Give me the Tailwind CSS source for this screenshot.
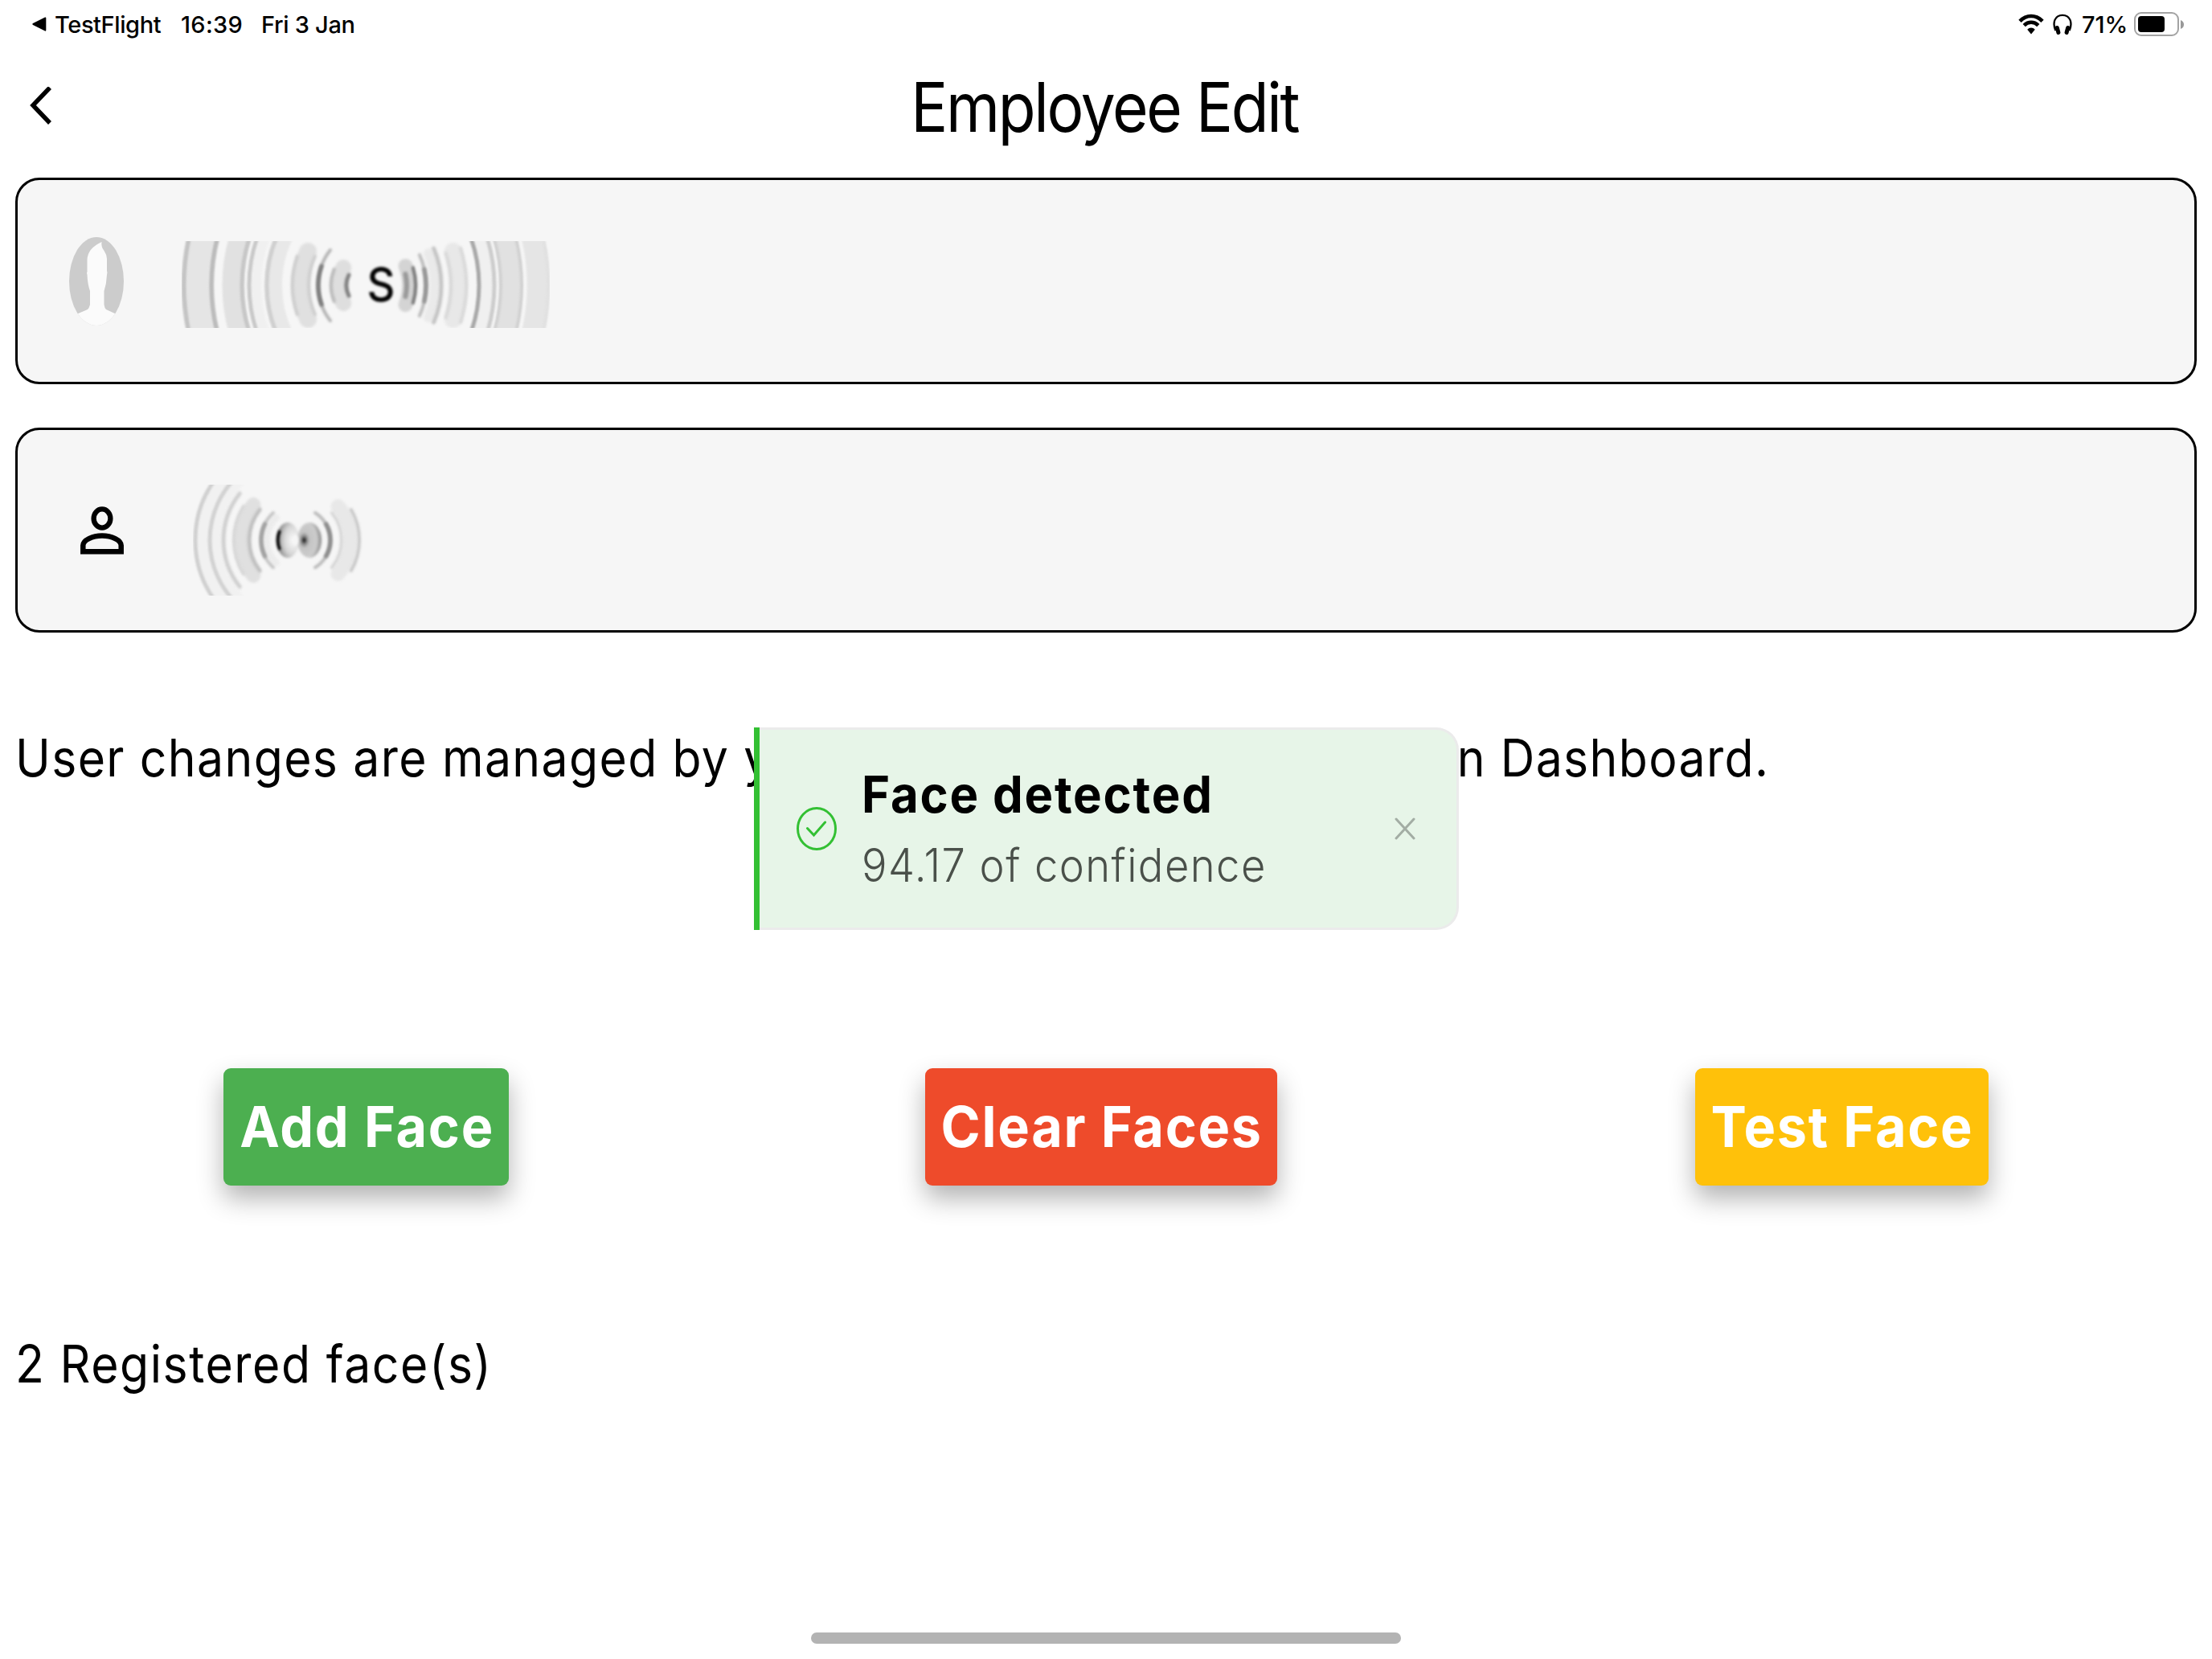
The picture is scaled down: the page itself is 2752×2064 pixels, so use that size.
<!DOCTYPE html>
<html lang="en">
<head>
  <meta charset="utf-8">
  <meta name="viewport" content="width=device-width, initial-scale=1">
  <title>Employee Edit</title>
  <script src="https://cdn.jsdelivr.net/npm/@tailwindcss/browser@4"></script>
</head>
<body class="relative h-[2064px] w-[2752px] overflow-hidden bg-white font-['Inter',sans-serif] text-black">
  <!-- status bar -->
  <div class="flex h-[60px] items-center justify-between pl-[39px] pr-[35px] text-[29px] leading-none font-medium whitespace-nowrap">
    <div class="flex items-center">
      <svg class="h-[20px] w-[19px]" viewBox="0 0 19 20"><path d="M17 1.5 2 9q-1.8 1 0 2l15 7.500q1.300.5 1.300-1V2.500q0-1.500-1.300-1z" /></svg>
      <span class="ml-[10px] w-[133px] tracking-[-0.4px]">TestFlight</span>
      <span class="ml-[24px] w-[76px] tracking-[0.3px]">16:39</span>
      <span class="ml-[24px] tracking-[-0.3px]">Fri 3 Jan</span>
    </div>
    <div class="flex items-center">
      <svg class="h-[26px] w-[32px]" viewBox="0 0 32 26" fill="none" stroke="#000">
        <path d="M2 9.300Q8 3 16 3t14 6.300" stroke-width="4.600" />
        <path d="M7.200 14.600q3.800-3.800 8.800-3.800t8.800 3.800" stroke-width="4.600" />
        <path d="M16 17.500q2.800 0 4.800 2.300L16 25.500l-4.800-5.700q2-2.300 4.800-2.300z" fill="#000" stroke="none" />
      </svg>
      <svg class="ml-[11px] h-[26px] w-[24px]" viewBox="0 0 24 26" fill="none" stroke="#000">
        <path d="M3.300 21C-.8 11 2.500 1.800 12 1.800S24.800 11 20.700 21" stroke-width="2.300" />
        <path d="M5.300 17.500l1.600 6M18.700 17.500l-1.600 6" stroke-width="5" stroke-linecap="round" />
      </svg>
      <span class="ml-[12px] w-[55px]">71%</span>
      <div class="ml-[10px] flex h-[30px] w-[56px] items-center rounded-[9px] border-2 border-[#a3a3a3] pl-[3px]">
        <div class="h-[20px] w-[33px] rounded-[4px] bg-black"></div>
      </div>
      <svg class="ml-[2px] h-[11px] w-[4px]" viewBox="0 0 4 11"><path d="M0 0q4 1.500 4 5.500T0 11z" fill="#999" /></svg>
    </div>
  </div>

  <!-- header -->
  <header class="flex h-[146px] items-center px-[37px]">
    <svg class="h-[50px] w-[28px]" viewBox="0 0 28 50" fill="none" stroke="#000" stroke-width="5.500"><path d="M25 1 4 23l21 22" /></svg>
    <h1 class="grow pr-[35px] text-center text-[85px] leading-none tracking-[-2.500px] whitespace-nowrap scale-x-90">Employee Edit</h1>
  </header>

  <main class="px-[19px] pt-[15px]">
    <div class="flex h-[257px] items-center rounded-[30px] border-3 border-black bg-[#f6f6f6] pl-[64px]">
      <svg class="h-[110px] w-[68px]" viewBox="0 0 68 110">
        <clipPath id="avatar"><ellipse cx="34" cy="55" rx="34" ry="55" /></clipPath>
        <g clip-path="url(#avatar)">
          <path d="M0 0h68v110H0z" fill="#ccc" />
          <path d="M40.500 6Q23 14 22.500 28v15q-1 1.500 0 4 .5 12 3.500 20v17q-1 4-3 6L9 96v14h50V96L46 90q-2-2-2.500-6V67q3-9 3.500-20 1-3 0-5V27q-.5-6-3.500-10-4-5-3-11z" fill="#fbfbfb" />
        </g>
      </svg>
      <svg id="name" class="mt-[9px] ml-[72px] h-[108px] w-[458px]" viewBox="0 0 458 108">
        <text x="248" y="75" text-anchor="middle" class="blur-[1.500px] text-[59px] font-medium" textLength="35" lengthAdjust="spacingAndGlyphs">S</text>
      </svg>
    </div>

    <div class="mt-[54px] flex h-[255px] items-center rounded-[30px] border-3 border-black bg-[#f6f6f6] pl-[78px]">
      <svg class="h-[60px] w-[54px]" viewBox="0 0 54 60" fill="none" stroke="#000">
        <ellipse cx="27" cy="15" rx="10.400" ry="11.600" stroke-width="6.300" />
        <path d="M3.300 56.200V48.500C3.300 42 15 36.500 27 36.500S50.700 42 50.700 48.500v7.700z" stroke-width="6.500" />
      </svg>
      <svg id="code" class="mt-[25px] ml-[86px] h-[138px] w-[212px]" viewBox="0 0 212 138">
        <defs>
          <radialGradient id="core-left" cx=".75" cy=".5" r=".7"><stop offset=".1" stop-color="#f6f6f6" /><stop offset=".6" stop-color="#d4d4d4" /><stop offset=".85" stop-color="#aaa" /><stop offset="1" stop-color="#777" /></radialGradient>
          <radialGradient id="core-right" cx=".28" cy=".5" r=".75"><stop offset="0" stop-color="#000" /><stop offset=".15" stop-color="#888" /><stop offset=".3" stop-color="#c4c4c4" /><stop offset=".7" stop-color="#ccc" /><stop offset="1" stop-color="#777" /></radialGradient>
        </defs>
        <g class="blur-[1.500px]">
          <ellipse cx="118" cy="69" rx="14" ry="22" fill="url(#core-left)" />
          <ellipse cx="145" cy="69" rx="15" ry="22" fill="url(#core-right)" />
          <path d="M108 57q-5 12 0 24" fill="none" stroke="#000" stroke-width="4" />
          <ellipse cx="128" cy="69" rx="4" ry="7" fill="#f6f6f6" />
        </g>
      </svg>
    </div>

    <p class="mt-[124px] flex w-[2182px] justify-between text-[64px] leading-none tracking-[1.500px] whitespace-nowrap">
      <span class="origin-left scale-x-92">User changes are managed by your</span>
      <span class="origin-right scale-x-92">Admin Dashboard.</span>
    </p>

    <div class="mt-[354px] flex justify-around text-[70px] leading-none font-bold tracking-[1.800px] whitespace-nowrap text-white">
      <button class="flex h-[146px] w-[355px] items-center justify-center rounded-[9px] bg-[#4caf50] pl-[2px] shadow-[0_16px_32px_rgba(0,0,0,0.3)]"><span class="scale-x-95">Add Face</span></button>
      <button class="mr-[2px] flex h-[146px] w-[438px] items-center justify-center rounded-[9px] bg-[#ee4b2b] pl-[2px] shadow-[0_16px_32px_rgba(0,0,0,0.3)]"><span class="scale-x-95">Clear Faces</span></button>
      <button class="flex h-[146px] w-[365px] items-center justify-center rounded-[9px] bg-[#ffc10a] pl-[2px] shadow-[0_16px_32px_rgba(0,0,0,0.3)]"><span class="scale-x-95">Test Face</span></button>
    </div>

    <p class="mt-[190px] origin-left text-[64px] leading-none tracking-[1.700px] whitespace-nowrap scale-x-92">2 Registered face(s)</p>
  </main>

  <!-- toast -->
  <div class="absolute top-[905px] left-[938px] flex h-[252px] w-[877px]">
    <div class="w-[7px] bg-[#33c033]"></div>
    <div class="flex grow items-center rounded-r-[28px] border-y-3 border-r-3 border-[#ebebeb] bg-[#e7f5e8] pr-[51px] pl-[46px]">
      <svg class="h-[54px] w-[50px]" viewBox="0 0 50 54" fill="none" stroke="#33c033" stroke-width="3">
        <ellipse cx="25" cy="27" rx="23.500" ry="25.500" />
        <path d="M13.500 26.500 21.500 35 35.500 19" stroke-linecap="round" />
      </svg>
      <div class="ml-[31px] flex w-[640px] flex-col gap-[28px] leading-none whitespace-nowrap">
        <div class="origin-left text-[63px] font-bold tracking-[1.900px] scale-x-95">Face detected</div>
        <div class="origin-left text-[57px] font-light tracking-[1.600px] text-[#4a504a] scale-x-92">94.17 of confidence</div>
      </div>
      <svg class="ml-auto h-[28px] w-[26px]" viewBox="0 0 26 28" fill="none" stroke="#a3ada4" stroke-width="3" stroke-linecap="round"><path d="M2 2l22 24M24 2 2 26" /></svg>
    </div>
  </div>

  <!-- home indicator -->
  <div class="absolute bottom-[19px] left-1/2 h-[14px] w-[734px] -translate-x-1/2 rounded-full bg-[#b3b3b3]"></div>

  <script>
    // each ring: radius (negative is left of the centre), stroke width, colour, half height
    const drawRings = (id, cx, cy, ratio, rings) => {
      const svg = document.getElementById(id)
      rings.forEach(([r, width, color, half]) => {
        const rx = Math.abs(r)
        const ry = rx * ratio
        const h = Math.min(half, ry * 0.95)
        const x = cx + r * Math.sqrt(1 - (h / ry) ** 2)
        const path = document.createElementNS('http://www.w3.org/2000/svg', 'path')
        path.setAttribute('d', `M${x} ${cy - h}A${rx} ${ry} 0 0 ${r < 0 ? 0 : 1} ${x} ${cy + h}`)
        path.setAttribute('fill', 'none')
        path.setAttribute('stroke', color)
        path.setAttribute('stroke-width', width)
        path.setAttribute('stroke-linecap', half < 60 ? 'round' : 'butt')
        path.setAttribute('class', half < 60 ? 'blur-[1.500px]' : 'blur-[1px]')
        svg.prepend(path)
      })
    }

    drawRings('name', 229, 55, 1.12, [
      [-226, 6, '#c4c4c4', 70], [-192, 6, '#bcbcbc', 70], [-209, 28, '#e5e5e5', 70],
      [-154, 5, '#c6c6c6', 70], [-165, 27, '#e1e1e1', 70],
      [-145, 5, '#c8c8c8', 70], [-136, 12, '#f0f0f0', 70],
      [-123, 5, '#cfcfcf', 70], [-115, 22, '#e8e8e8', 70],
      [-91, 4, '#cdcdcd', 36], [-71, 4, '#cdcdcd', 36], [-81, 22, '#e0e0e0', 42],
      [-59, 5, '#7c7c7c', 24], [-59, 4, '#b4b4b4', 44],
      [-43, 4, '#bbb', 20], [-24, 5, '#808080', 13], [-34, 20, '#dedede', 22],
      [62, 4, '#777', 22], [51, 6, '#999', 14], [54, 18, '#d4d4d4', 24],
      [75, 5, '#959595', 20], [75, 4, '#bbb', 38],
      [94, 5, '#c4c4c4', 46], [86, 12, '#eaeaea', 40],
      [106, 4, '#d8d8d8', 40], [125, 4, '#d8d8d8', 46], [115, 22, '#e8e8e8', 42],
      [141, 5, '#a8a8a8', 70], [160, 5, '#ccc', 70], [150, 16, '#f0f0f0', 70],
      [168, 4, '#d0d0d0', 70], [194, 4, '#d0d0d0', 70], [181, 26, '#e1e1e1', 70],
      [227, 4, '#e0e0e0', 70], [214, 27, '#e5e5e5', 70],
    ])

    drawRings('code', 131, 69, 1, [
      [-128, 5, '#d0d0d0', 80], [-110, 5, '#d2d2d2', 80], [-93, 5, '#cfcfcf', 58],
      [-112, 30, '#f1f1f1', 80],
      [-80, 4, '#d6d6d6', 42], [-61, 5, '#c0c0c0', 38], [-71, 18, '#e0e0e0', 44],
      [-46, 5, '#a0a0a0', 20], [-46, 4, '#c4c4c4', 34], [-39, 8, '#ececec', 28],
      [40, 5, '#8c8c8c', 20], [40, 4, '#bbb', 34],
      [76, 4, '#c8c8c8', 38], [54, 4, '#d6d6d6', 34], [65, 18, '#e8e8e8', 42],
    ])
  </script>
</body>
</html>
